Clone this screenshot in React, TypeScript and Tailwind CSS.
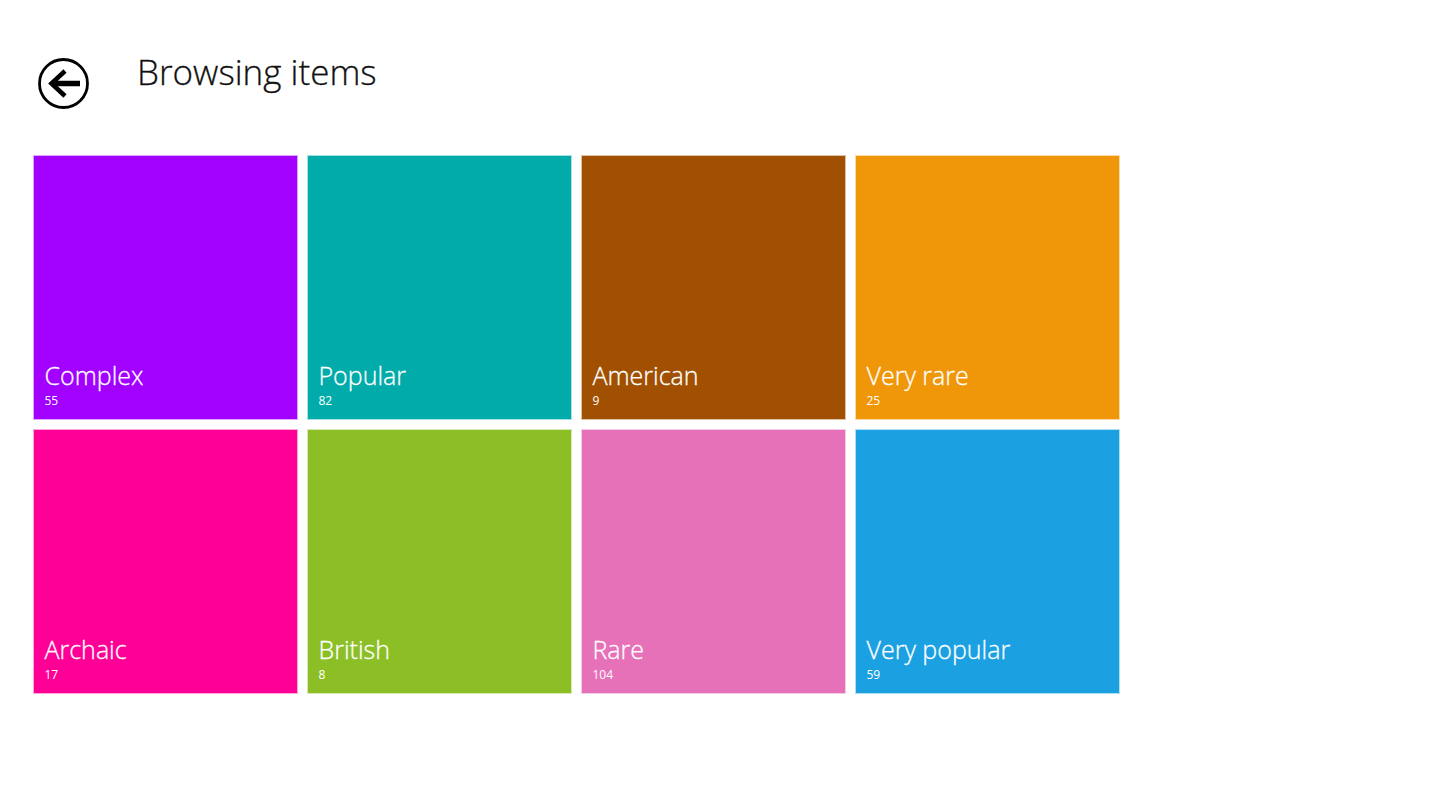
const tiles = [
  { name: "Complex", count: 55, color: "bg-[#a200ff] ring-1 ring-[#a200ff]/35" },
  { name: "Popular", count: 82, color: "bg-[#00aba9] ring-1 ring-[#00aba9]/35" },
  { name: "American", count: 9, color: "bg-[#a05000] ring-1 ring-[#a05000]/35" },
  { name: "Very rare", count: 25, color: "bg-[#f09609] ring-1 ring-[#f09609]/35" },
  { name: "Archaic", count: 17, color: "bg-[#ff0097] ring-1 ring-[#ff0097]/35" },
  { name: "British", count: 8, color: "bg-[#8cbf26] ring-1 ring-[#8cbf26]/35" },
  { name: "Rare", count: 104, color: "bg-[#e671b8] ring-1 ring-[#e671b8]/35" },
  { name: "Very popular", count: 59, color: "bg-[#1ba1e2] ring-1 ring-[#1ba1e2]/35" },
];

export default function App() {
  return (
    <div className="w-full h-[810px] bg-white overflow-hidden font-['Open_Sans',sans-serif]">
      <div className="flex items-start h-[156px] pl-[38px]">
        <button className="mt-[58px] w-[51px] h-[51px] shrink-0">
          <svg viewBox="0 0 51 51" className="w-[51px] h-[51px]" fill="none" stroke="#000">
            <circle cx="25.5" cy="25.5" r="24" strokeWidth="2.8" />
            <path d="M16 25.5H42" strokeWidth="5.5" />
            <path d="M27 13L13.5 25.5L27 38" strokeWidth="4.6" />
          </svg>
        </button>
        <h1 className="ml-[48px] mt-[48px] text-[35px] leading-[48px] font-light text-[#111] [-webkit-text-stroke:0.3px_#111]">Browsing items</h1>
      </div>
      <div className="grid grid-cols-[repeat(4,263px)] gap-[11px] pl-[34px]">
        {tiles.map((t) => (
          <div key={t.name} className={`${t.color} h-[263px] flex flex-col justify-end px-[10.5px] pb-[10px] text-white`}>
            <div className="text-[25px] leading-[32px] font-light [-webkit-text-stroke:0.3px_#fff]">{t.name}</div>
            <div className="text-[12px] leading-[16px] mt-[2px]">{t.count}</div>
          </div>
        ))}
      </div>
    </div>
  );
}
